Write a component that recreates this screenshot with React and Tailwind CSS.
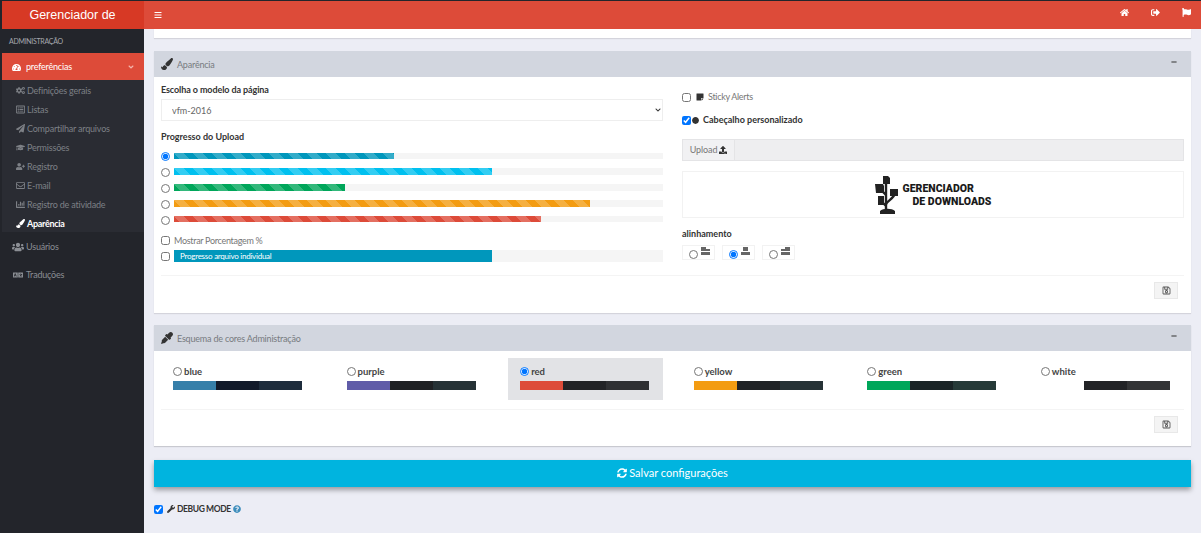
import React from "react";
import {
  FaBars, FaHome, FaSignOutAlt, FaFlag, FaTachometerAlt, FaAngleDown, FaCogs, FaRegListAlt, FaPaperPlane,
  FaGraduationCap, FaUserPlus, FaRegEnvelope, FaChartBar, FaPaintBrush, FaUsers, FaLanguage, FaMinus,
  FaEyeDropper, FaSyncAlt, FaWrench, FaQuestionCircle, FaUpload, FaRegSave, FaStickyNote, FaCircle, FaChevronDown,
} from "react-icons/fa";

const stripe =
  "bg-[linear-gradient(45deg,rgba(255,255,255,.2)_25%,transparent_25%,transparent_50%,rgba(255,255,255,.2)_50%,rgba(255,255,255,.2)_75%,transparent_75%,transparent)] bg-[length:19px_19px]";

const subItems = [
  [FaCogs, "Definições gerais"],
  [FaRegListAlt, "Listas"],
  [FaPaperPlane, "Compartilhar arquivos"],
  [FaGraduationCap, "Permissões"],
  [FaUserPlus, "Registro"],
  [FaRegEnvelope, "E-mail"],
  [FaChartBar, "Registro de atividade"],
];

function Sidebar() {
  return (
    <aside className="w-[142px] shrink-0 bg-[#23252b] text-[9px] tracking-[-0.2px] text-[#8b8e94]">
      <div className="h-[24px] pt-[1px] flex items-center pl-[7px] text-[7px] tracking-[-0.3px] text-[#a5a8ad]">ADMINISTRAÇÃO</div>
      <div className="h-[27px] pt-[1px] bg-[#dd4b39] text-white flex items-center pl-[10px] pr-[9px] gap-[5px]">
        <FaTachometerAlt className="text-[9px]" />
        <span className="flex-1">preferências</span>
        <FaAngleDown className="text-[8px] text-[#f3b5ac]" />
      </div>
      <div className="bg-[#2a2c33] pt-[1px] h-[152px]">
        {subItems.map(([Icon, label]) => (
          <div key={label} className="h-[19px] flex items-center pl-[13px] gap-[2px] text-[#7d8086]">
            <span className="w-[10px] flex justify-center"><Icon className="text-[9px]" /></span>
            <span>{label}</span>
          </div>
        ))}
        <div className="h-[19px] flex items-center pl-[13px] gap-[2px] text-white font-bold tracking-[-0.3px]">
          <span className="w-[10px] flex justify-center"><FaPaintBrush className="text-[9px]" /></span>
          <span>Aparência</span>
        </div>
      </div>
      <div className="h-[28px] pt-[1px] flex items-center pl-[10px] gap-[2px] text-[#8b8e94]">
        <FaUsers className="text-[12px]" />
        <span>Usuários</span>
      </div>
      <div className="h-[28px] pt-[1px] flex items-center pl-[11px] gap-[3px] text-[#8b8e94]">
        <FaLanguage className="text-[10px]" />
        <span>Traduções</span>
      </div>
    </aside>
  );
}

function Header() {
  return (
    <header className="h-[28px] shrink-0 flex bg-[#dd4b39] text-white">
      <div className="w-[142px] bg-[#d73925] flex items-center justify-center pr-[1px] text-[12.5px] font-['Liberation_Sans',sans-serif]">
        Gerenciador de
      </div>
      <div className="flex-1 flex items-center pl-[10px]">
        <FaBars className="text-[8px] -mt-[1px]" />
        <div className="ml-auto flex items-center gap-[22px] pr-[10px] text-[9px] -mt-[6px]">
          <FaHome />
          <FaSignOutAlt />
          <FaFlag />
        </div>
      </div>
    </header>
  );
}

function PanelHeader({ icon: Icon, title }) {
  return (
    <div className="h-[26px] bg-[#d2d6df] flex items-center pl-[7px] pr-[14px] text-[9px] tracking-[-0.2px] text-[#777b80]">
      <Icon className="text-[12px] text-[#333] mr-[4px]" />
      <span className="mt-[1px]">{title}</span>
      <FaMinus className="ml-auto mb-[4px] text-[6px] text-[#333]" />
    </div>
  );
}

function SaveButton() {
  return (
    <div className="flex justify-end pt-[6px] pr-[6px] border-t border-[#f4f4f4]">
      <button className="w-[24px] h-[17px] bg-[#f4f4f4] border border-[#e8e8e8] flex items-center justify-center text-[#555] text-[9px]">
        <FaRegSave />
      </button>
    </div>
  );
}

function ProgressRow({ value, color, checked }) {
  return (
    <div className="h-[15.8px] flex items-center gap-[4px]">
      <input type="radio" name="bar" readOnly checked={!!checked} className="w-[9px] h-[9px] m-0 mt-[2px] shrink-0" />
      <div className="flex-1 h-[6.5px] bg-[#f5f5f5]">
        <div className={`h-full ${color} ${stripe}`} style={{ width: value }} />
      </div>
    </div>
  );
}

function AlignIcon({ side }) {
  const x = side === "left" ? 0 : side === "center" ? 2 : 4;
  const lx = side === "left" ? 5 : 0;
  return (
    <svg width="9" height="8" viewBox="0 0 9 8" fill="#666" className="block">
      <rect x={x} y="0" width="5" height="4" />
      {side !== "center" && <rect x={lx} y="2" width="4" height="2" />}
      <rect x="0" y="5" width="9" height="3" />
    </svg>
  );
}

function AlignOption({ side, checked }) {
  return (
    <div className="w-[33px] h-[15px] border border-[#f2f2f2] flex items-start pl-[6px] gap-[3px]">
      <input type="radio" name="al" readOnly checked={!!checked} className="w-[9px] h-[9px] m-0 mt-[3.5px]" />
      <span className="mt-[1px]"><AlignIcon side={side} /></span>
    </div>
  );
}

function Logo() {
  return (
    <div className="h-[47px] mt-[10px] border border-[#f2f2f2] flex items-center justify-center">
      <svg width="24" height="40" viewBox="0 0 24 40" fill="none" stroke="#222" className="mr-[4px]">
        <path d="M11 3v32M11 20 4 13M11 30 C11 26 19 24 20 18M11 31 7 27" strokeWidth="2.4" />
        <path d="M8 1h5l2 2v6H8zM0 9h8l1 2v7H1zM15 14h8v7h-8zM3 21h6v9H3zM5 36c3-3 12-3 15 0v3H5z" fill="#222" stroke="none" />
      </svg>
      <div className="font-['Roboto',sans-serif] font-black text-[10.5px] leading-[13px] text-[#1a1a1a]">
        <div>GERENCIADOR</div>
        <div className="pl-[10px]">DE DOWNLOADS</div>
      </div>
    </div>
  );
}

function Swatch({ name, colors, checked }) {
  return (
    <div className={`h-[42px] pl-[12px] pr-[14px] pt-[8px] ${checked ? "bg-[#e2e3e6]" : ""}`}>
      <div className="h-[11px] mt-[1px] flex items-center gap-[2px] font-bold text-[9.5px] text-[#444]">
        <input type="radio" name="sc" readOnly checked={!!checked} className="w-[9px] h-[9px] m-0 -mt-[2px]" />
        <span>{name}</span>
      </div>
      <div className="flex h-[9px] mt-[3px]">
        {colors.map((c, i) => (
          <div key={i} className={`flex-1 ${c}`} />
        ))}
      </div>
    </div>
  );
}

export default function App() {
  return (
    <div className="w-[1201px] h-[533px] overflow-hidden bg-[#23252b] pt-[1px] flex flex-col font-['Lato',sans-serif]">
      <div className="pl-[2px] flex flex-col h-full">
        <Header />
        <div className="flex flex-1 min-h-0">
          <Sidebar />
          <main className="flex-1 bg-[#ecedf5] px-[10px]">
            <div className="h-[9px] bg-white shadow-[0_1px_1px_rgba(0,0,0,0.1)]" />

            <section className="mt-[13px] h-[262px] bg-white shadow-[0_1px_1px_rgba(0,0,0,0.1)] flex flex-col">
              <PanelHeader icon={FaPaintBrush} title="Aparência" />
              <div className="flex-1 grid grid-cols-2 gap-x-[19px] px-[7px] pt-[7px] h-[198px]">
                <div className="h-[192px]">
                  <div className="h-[12px] flex items-center font-bold text-[9px] tracking-[-0.1px] text-[#333]">Escolha o modelo da página</div>
                  <div className="relative mt-[3px]">
                    <select className="appearance-none block w-full h-[22px] border border-[#eeeeee] bg-white pl-[10px] pt-[1px] text-[9px] text-[#666]">
                      <option>vfm-2016</option>
                    </select>
                    <FaChevronDown className="absolute right-[2px] top-[8px] text-[6px] text-[#333]" />
                  </div>
                  <div className="h-[12px] mt-[10px] flex items-center font-bold text-[9px] text-[#333]">Progresso do Upload</div>
                  <div className="mt-[5px]">
                    <ProgressRow value="45%" color="bg-[#0097bc]" checked />
                    <ProgressRow value="65%" color="bg-[#00c0ef]" />
                    <ProgressRow value="35%" color="bg-[#00a65a]" />
                    <ProgressRow value="85%" color="bg-[#f39c12]" />
                    <ProgressRow value="75%" color="bg-[#dd4b39]" />
                  </div>
                  <div className="h-[12px] mt-[8px] flex items-center gap-[4px] text-[9px] tracking-[-0.3px] text-[#777]">
                    <input type="checkbox" readOnly className="w-[9px] h-[9px] m-0" />
                    <span>Mostrar Porcentagem %</span>
                  </div>
                  <div className="h-[12.5px] mt-[3px] flex items-center gap-[4px]">
                    <input type="checkbox" readOnly className="w-[9px] h-[9px] m-0 shrink-0" />
                    <div className="flex-1 h-full bg-[#f5f5f5]">
                      <div className="w-[65%] h-full bg-[#0097bc] text-white text-[8px] tracking-[-0.25px] flex items-center pl-[6px]">Progresso arquivo individual</div>
                    </div>
                  </div>
                </div>

                <div className="h-[192px] pt-[7px]">
                  <div className="h-[12px] flex items-center text-[9px] tracking-[-0.3px] text-[#777]">
                    <input type="checkbox" readOnly className="w-[9px] h-[9px] m-0 mr-[5px]" />
                    <FaStickyNote className="text-[8px] text-[#333] mr-[4px]" />
                    <span>Sticky Alerts</span>
                  </div>
                  <div className="h-[12px] mt-[11px] flex items-center text-[9px] font-bold text-[#333]">
                    <input type="checkbox" readOnly checked className="w-[9px] h-[9px] m-0 mr-[1px]" />
                    <FaCircle className="text-[7px] text-[#333] mr-[4px]" />
                    <span>Cabeçalho personalizado</span>
                  </div>
                  <div className="h-[22px] mt-[13px] flex bg-[#eeeef0] border border-[#e4e4e6]">
                    <div className="w-[52px] flex items-center justify-center gap-[2px] border-r border-[#e4e4e6] bg-[#f1f1f3] text-[9px] tracking-[-0.1px] text-[#777]">
                      <span>Upload</span>
                      <FaUpload className="text-[8px] text-[#333]" />
                    </div>
                  </div>
                  <Logo />
                  <div className="h-[12px] mt-[10px] flex items-center font-bold text-[9px] text-[#333]">alinhamento</div>
                  <div className="flex gap-[7px] mt-[5px]">
                    <AlignOption side="left" />
                    <AlignOption side="center" checked />
                    <AlignOption side="right" />
                  </div>
                </div>
              </div>
              <div className="h-[38px] mx-[7px] shrink-0 mb-0">
                <SaveButton />
              </div>
            </section>

            <section className="mt-[12px] h-[121px] bg-white shadow-[0_1px_1px_rgba(0,0,0,0.15)] flex flex-col">
              <PanelHeader icon={FaEyeDropper} title="Esquema de cores Administração" />
              <div className="px-[7px] pt-[7px] h-[58px] grid grid-cols-6 gap-x-[18.4px] content-start">
                <Swatch name="blue" colors={["bg-[#367fa9]", "bg-[#121a2a]", "bg-[#1e2c3c]"]} />
                <Swatch name="purple" colors={["bg-[#605ca8]", "bg-[#1f2124]", "bg-[#263236]"]} />
                <Swatch name="red" colors={["bg-[#dd4b39]", "bg-[#222326]", "bg-[#2f3033]"]} checked />
                <Swatch name="yellow" colors={["bg-[#f39c12]", "bg-[#1f2225]", "bg-[#263236]"]} />
                <Swatch name="green" colors={["bg-[#00a65a]", "bg-[#1a2426]", "bg-[#263a38]"]} />
                <Swatch name="white" colors={["bg-transparent", "bg-[#222326]", "bg-[#333436]"]} />
              </div>
              <div className="mx-[7px]">
                <SaveButton />
              </div>
            </section>

            <button className="mt-[14px] w-full h-[27px] pb-[1px] bg-[#00b4df] text-white text-[11px] flex items-center justify-center gap-[2px] shadow-[0_3px_5px_rgba(0,0,0,0.35)]">
              <FaSyncAlt className="text-[10px]" />
              <span>Salvar configurações</span>
            </button>

            <div className="mt-[16px] h-[12px] flex items-center text-[8.5px] tracking-[-0.4px] font-bold text-[#333]">
              <input type="checkbox" readOnly checked className="w-[9px] h-[9px] m-0 mr-[4px]" />
              <FaWrench className="text-[8px] mr-[2px]" />
              <span>DEBUG MODE</span>
              <FaQuestionCircle className="text-[8px] ml-[2px] text-[#3c8dbc]" />
            </div>
          </main>
        </div>
      </div>
    </div>
  );
}
